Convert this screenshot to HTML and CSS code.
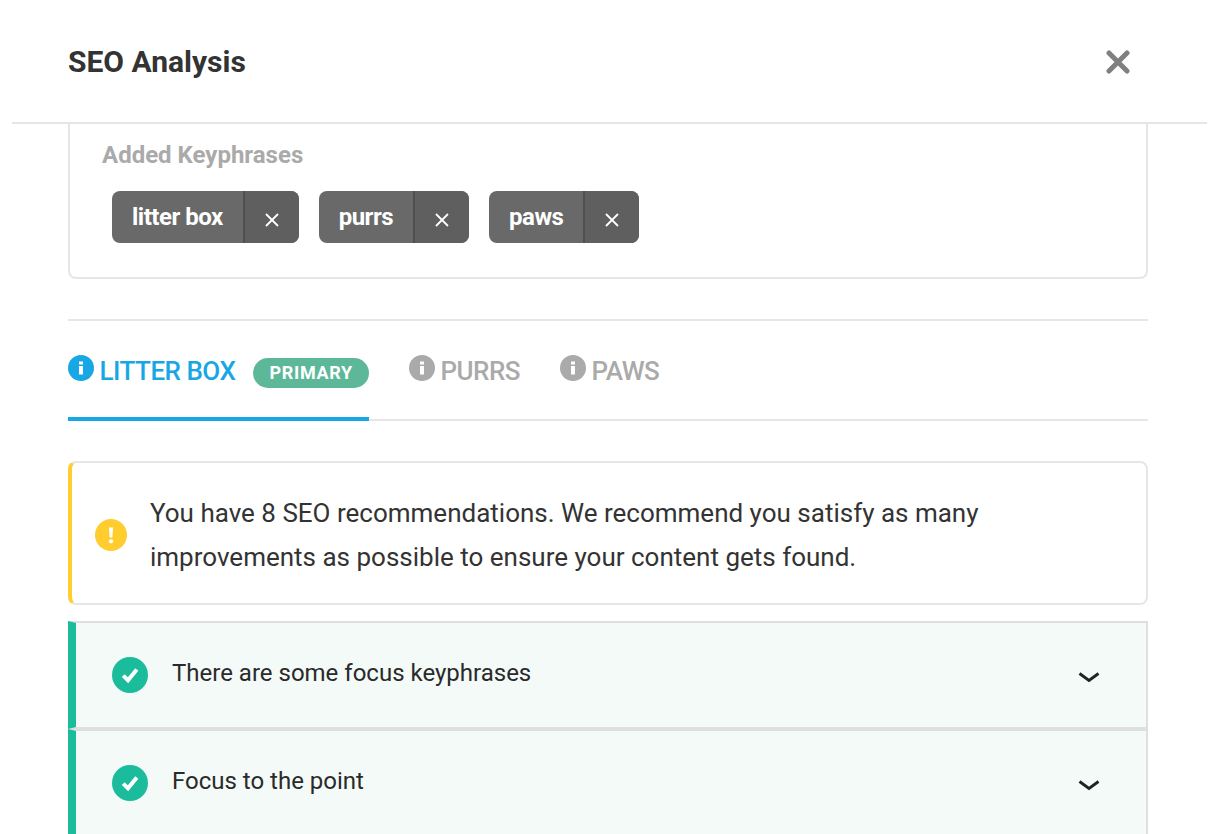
FILE: index.html
```html
<!DOCTYPE html>
<html lang="en">

<head>
    <meta charset="UTF-8">
    <title>SEO Analysis</title>
    <link rel="stylesheet" href="styles.css">
</head>

<body>
    <header class="modal-header">
        <h1>SEO Analysis</h1>
        <svg class="modal-close" viewBox="0 0 24 24" aria-label="Close">
            <path d="M3 3 21 21M21 3 3 21" />
        </svg>
    </header>

    <main class="modal-body">
        <section class="keyphrase-box">
            <h2>Added Keyphrases</h2>
            <div class="tags">
                <div class="tag">
                    <span class="tag-name">litter box</span>
                    <span class="tag-remove"><svg viewBox="0 0 14 14"><path d="M1 1 13 13M13 1 1 13" /></svg></span>
                </div>
                <div class="tag">
                    <span class="tag-name">purrs</span>
                    <span class="tag-remove"><svg viewBox="0 0 14 14"><path d="M1 1 13 13M13 1 1 13" /></svg></span>
                </div>
                <div class="tag">
                    <span class="tag-name">paws</span>
                    <span class="tag-remove"><svg viewBox="0 0 14 14"><path d="M1 1 13 13M13 1 1 13" /></svg></span>
                </div>
            </div>
        </section>

        <nav class="tabs">
            <div class="tab active">
                <svg class="tab-icon" viewBox="0 0 26 26">
                    <circle cx="13" cy="13" r="13" />
                    <path class="tab-icon-mark" d="M11 11h4v8.500h-4zM11 6.500h4v3h-4z" />
                </svg>
                <span class="tab-label">LITTER BOX</span>
                <span class="badge">PRIMARY</span>
            </div>
            <div class="tab">
                <svg class="tab-icon" viewBox="0 0 26 26">
                    <circle cx="13" cy="13" r="13" />
                    <path class="tab-icon-mark" d="M11 11h4v8.500h-4zM11 6.500h4v3h-4z" />
                </svg>
                <span class="tab-label">PURRS</span>
            </div>
            <div class="tab">
                <svg class="tab-icon" viewBox="0 0 26 26">
                    <circle cx="13" cy="13" r="13" />
                    <path class="tab-icon-mark" d="M11 11h4v8.500h-4zM11 6.500h4v3h-4z" />
                </svg>
                <span class="tab-label">PAWS</span>
            </div>
        </nav>

        <div class="alert">
            <svg class="alert-icon" viewBox="0 0 32 32">
                <circle cx="16" cy="16" r="16" />
                <path class="alert-mark" d="M14 8.500h4l-.6 10h-2.800z" />
                <circle class="alert-mark" cx="16" cy="22.300" r="2.100" />
            </svg>
            <p>You have 8 SEO recommendations. We recommend you satisfy as many improvements as possible to ensure your content gets found.</p>
        </div>

        <div class="check-row">
            <span class="check-icon"><svg viewBox="0 0 18 18"><path d="M5.600 9.300 8 11.600 12.400 6.200" /></svg></span>
            <span class="check-text">There are some focus keyphrases</span>
            <svg class="chevron" viewBox="0 0 22 12"><path d="M1.500 1.500 11 8.500 20.500 1.500" /></svg>
        </div>
        <div class="check-row">
            <span class="check-icon"><svg viewBox="0 0 18 18"><path d="M5.600 9.300 8 11.600 12.400 6.200" /></svg></span>
            <span class="check-text">Focus to the point</span>
            <svg class="chevron" viewBox="0 0 22 12"><path d="M1.500 1.500 11 8.500 20.500 1.500" /></svg>
        </div>
    </main>
</body>

</html>
```

FILE: styles.css
```css
* {
    box-sizing: border-box;
    font-family: Roboto, Arial, sans-serif;
}

html,
body {
    margin: 0;
    padding: 0;
    height: 834px;
    overflow: hidden;
    background-color: #fff;
}

/* modal header */
.modal-header {
    height: 124px;
    margin: 0 13px 0 12px;
    padding: 0 77px 0 56px;
    display: flex;
    justify-content: space-between;
    align-items: center;
    border-bottom: 2px solid #e6e6e6;
}

.modal-header h1 {
    margin: 0;
    font-size: 30px;
    font-weight: 700;
    color: #333;
}

.modal-close {
    width: 24px;
    height: 24px;
    margin-top: 2px;
    fill: none;
    stroke: #808080;
    stroke-width: 5;
    stroke-linecap: round;
}

.modal-body {
    padding: 0 72px 0 68px;
}

/* added keyphrases */
.keyphrase-box {
    height: 155px;
    padding: 16px 32px 0 32px;
    border: 2px solid #e6e6e6;
    border-top: none;
    border-radius: 0 0 8px 8px;
}

.keyphrase-box h2 {
    margin: 0;
    font-size: 24px;
    line-height: 30px;
    font-weight: 700;
    color: #aaa;
}

.tags {
    display: flex;
    gap: 20px;
    margin: 21px 0 0 10px;
}

.tag {
    height: 52px;
    display: flex;
    color: #fff;
    background-color: #696969;
    border-radius: 8px;
    overflow: hidden;
}

.tag-name {
    padding: 0 20px;
    font-size: 24px;
    font-weight: 700;
    letter-spacing: -0.5px;
    line-height: 52px;
}

.tag-remove {
    width: 56px;
    display: flex;
    justify-content: center;
    align-items: center;
    padding-top: 5px;
    background-color: #5f5f5f;
    border-left: 2px solid #4f4f4f;
}

.tag-remove svg {
    width: 14px;
    height: 14px;
    fill: none;
    stroke: #fff;
    stroke-width: 1.8;
}

/* tabs */
.tabs {
    height: 102px;
    margin-top: 40px;
    display: flex;
    gap: 40px;
    border-top: 2px solid #e6e6e6;
    border-bottom: 2px solid #e6e6e6;
}

.tab {
    display: flex;
    height: 100px;
    padding-top: 34px;
    color: #aaa;
}

.tab.active {
    color: #18a7e5;
    border-bottom: 4px solid #18a7e5;
}

.tab-icon {
    width: 26px;
    height: 26px;
    margin-right: 5.5px;
    fill: currentColor;
}

.tab-icon-mark {
    fill: #fff;
}

.tab-label {
    font-size: 26px;
    font-weight: 500;
    line-height: 32px;
    letter-spacing: -0.5px;
}

.badge {
    height: 30px;
    margin: 3px 0 0 18px;
    padding: 0 16px;
    font-size: 18px;
    font-weight: 700;
    letter-spacing: 0.7px;
    line-height: 30px;
    color: #fff;
    background-color: #5cb899;
    border-radius: 15px;
}

/* notice */
.alert {
    height: 144px;
    margin-top: 40px;
    padding-left: 23px;
    display: flex;
    align-items: center;
    gap: 23px;
    border: 2px solid #e6e6e6;
    border-left: 4px solid #ffcd2e;
    border-radius: 8px;
}

.alert-icon {
    flex-shrink: 0;
    width: 32px;
    height: 32px;
    margin-top: 4px;
    fill: #ffcd2e;
}

.alert-mark {
    fill: #fff;
}

.alert p {
    margin: 0;
    padding-top: 4px;
    width: 900px;
    font-size: 26px;
    line-height: 44px;
    color: #333;
}

/* checks */
.check-row {
    height: 108px;
    padding: 0 46px 0 36px;
    display: flex;
    align-items: center;
    background-color: #f3faf8;
    border: 2px solid #dfdfdf;
    border-left: 8px solid #1abc9c;
}

.alert + .check-row {
    margin-top: 16px;
}

.check-icon {
    width: 36px;
    height: 36px;
    margin-right: 24px;
    border-radius: 50%;
    background-color: #1abc9c;
}

.check-icon svg {
    display: block;
    width: 36px;
    height: 36px;
    fill: none;
    stroke: #fff;
    stroke-width: 2;
}

.check-text {
    flex: 1;
    padding-bottom: 4px;
    font-size: 24px;
    color: #2a2a2a;
}

.chevron {
    width: 22px;
    height: 12px;
    margin-top: 5px;
    fill: none;
    stroke: #222;
    stroke-width: 2.8;
}
```
